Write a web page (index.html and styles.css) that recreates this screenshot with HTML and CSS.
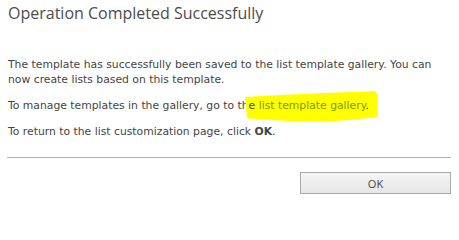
FILE: index.html
```html
<!DOCTYPE html>
<html>
<head>
<meta charset="utf-8">
<link rel="stylesheet" href="styles.css">
</head>
<body>
<div class="dialog">
  <h1 class="title">Operation Completed Successfully</h1>
  <div class="content">
    <p class="para">The template has successfully been saved to the list template gallery. You can now create lists based on this template.</p>
    <p class="para">To manage templates in the gallery, go to th<span class="mark"><svg class="marker" width="140" height="36" viewBox="0 0 140 36"><path d="M3 8 C30 6 80 4 133 2 L136 6 L135 28 C110 31 80 34 50 32 C30 31 12 30 5 29 Z" fill="#ffff00"/></svg><span class="marktext">e <a class="link" href="#">list template gallery</a>.</span></span></p>
    <p class="para">To return to the list customization page, click <b>OK</b>.</p>
  </div>
  <hr class="rule">
  <div class="actions">
    <button class="btn">OK</button>
  </div>
</div>
</body>
</html>
```
FILE: styles.css
```css
html, body {
  margin: 0;
  padding: 0;
  background: #ffffff;
}
.dialog {
  padding: 2px 8px 0 8px;
  font-family: "DejaVu Sans", Verdana, sans-serif;
  font-size: 10.8px;
  color: #444444;
}
.title {
  margin: 0;
  font-family: "Open Sans", "Segoe UI", sans-serif;
  font-weight: normal;
  font-size: 16px;
  line-height: 22px;
  color: #4c4c4c;
}
.content {
  margin-top: 33px;
}
.para {
  margin: 0 0 11px 0;
  line-height: 15px;
}
.mark {
  position: relative;
}
.marker {
  position: absolute;
  left: -7px;
  top: -10px;
  z-index: 0;
}
.marktext {
  position: relative;
  z-index: 1;
}
.link {
  color: #7f9800;
  text-decoration: none;
}
.rule {
  margin: 18px 0 0 -1px;
  border: 0;
  border-top: 1px solid #b0b0b0;
  height: 0;
}
.actions {
  display: flex;
  justify-content: flex-end;
  padding-top: 14px;
}
.btn {
  width: 151px;
  height: 22px;
  border: 1px solid #ababab;
  background: linear-gradient(#f5f5f5, #e6e6e6);
  font-family: "Open Sans", "Segoe UI", sans-serif;
  font-size: 11px;
  color: #444444;
  padding: 0;
  margin-right: 0;
}
```
